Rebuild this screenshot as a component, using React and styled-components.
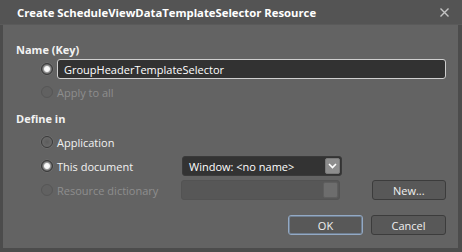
import React from "react";
import styled, { createGlobalStyle } from "styled-components";

const Global = createGlobalStyle`
  html, body {
    margin: 0;
    padding: 0;
    background: #4b4b4b;
  }
  * { box-sizing: border-box; }
`;

const Window = styled.div`
  width: 462px;
  height: 252px;
  display: flex;
  flex-direction: column;
  background: #636363;
  border-left: 3px solid #4c4c4c;
  border-right: 4px solid #4c4c4c;
  border-bottom: 4px solid #4c4c4c;
  font-family: "Open Sans", "Noto Sans", sans-serif;
  font-size: 11px;
  color: #f2f2f2;
`;

const TitleBar = styled.div`
  height: 25px;
  margin: 0 -4px 0 -3px;
  padding: 0 13px 0 17px;
  display: flex;
  align-items: center;
  justify-content: space-between;
  background: #545454;
  border-bottom: 1px solid #5a5a5a;
`;

const Title = styled.div`
  font-weight: 700;
  font-size: 11.3px;
  color: #ffffff;
`;

const Body = styled.div`
  flex: 1;
  display: flex;
  flex-direction: column;
  padding: 17px 12px 0 13px;
`;

const Heading = styled.div`
  font-weight: 700;
  line-height: 16px;
  height: 16px;
  margin-bottom: ${(p) => p.$mb || 0}px;
`;

const Row = styled.div`
  display: flex;
  align-items: center;
  height: 20px;
  margin-left: 25px;
  margin-bottom: ${(p) => p.$mb || 0}px;
`;

const RadioDot = styled.span`
  width: 12px;
  height: 12px;
  border-radius: 50%;
  flex: none;
  margin-right: 4px;
  border: 1px solid ${(p) => (p.$disabled ? "#565656" : "#3a3a3a")};
  background: ${(p) =>
    p.$checked
      ? "radial-gradient(circle, #ffffff 0, #f4f4f4 2.5px, #9a9a9a 3.5px, #5a5a5a 5px)"
      : p.$disabled
      ? "#616161"
      : "radial-gradient(circle, #5c5c5c 0, #6a6a6a 5px)"};
  box-shadow: ${(p) => (p.$disabled ? "none" : "0 0 0 0.5px #777")};
`;

const Label = styled.span`
  width: ${(p) => (p.$w ? `${p.$w}px` : "auto")};
  color: ${(p) => (p.$disabled ? "#8e8e8e" : "#f2f2f2")};
  white-space: nowrap;
`;

const TextInput = styled.div`
  flex: 1;
  height: 20px;
  padding-left: 6px;
  display: flex;
  align-items: center;
  background: #323232;
  border: 1px solid #cfcfcf;
  border-radius: 3px;
  color: #ffffff;
`;

const Combo = styled.div`
  width: 160px;
  height: 20px;
  padding: 0 1px 0 6px;
  display: flex;
  align-items: center;
  justify-content: space-between;
  background: ${(p) => (p.$disabled ? "#575757" : "#333333")};
  border: 1px solid ${(p) => (p.$disabled ? "#535353" : "#3a3a3a")};
  border-radius: 3px;
  color: #ffffff;
`;

const ComboButton = styled.span`
  width: 15px;
  height: 16px;
  display: flex;
  align-items: center;
  justify-content: center;
  border-radius: 2px;
  background: ${(p) => (p.$disabled ? "#6d6d6d" : "#8d8d8d")};
  border: 1px solid ${(p) => (p.$disabled ? "#5e5e5e" : "#7a7a7a")};
`;

const Button = styled.button`
  width: 75px;
  height: 20px;
  padding: 0;
  font-family: inherit;
  font-size: 11px;
  color: #f0f0f0;
  background: #585858;
  border: 1px solid ${(p) => (p.$default ? "#93a9c4" : "#3c3c3c")};
  box-shadow: ${(p) => (p.$default ? "inset 0 0 0 1px #6f7f92" : "none")};
  border-radius: 3px;
  margin-left: ${(p) => p.$ml || 0}px;
`;

const Footer = styled.div`
  display: flex;
  justify-content: flex-end;
  margin-top: 15px;
  gap: 8px;
`;

const Radio = ({ checked, disabled }) => (
  <RadioDot $checked={checked} $disabled={disabled} />
);

const Close = () => (
  <svg width="9" height="9" viewBox="0 0 9 9">
    <path d="M0.5 0.5 L8.5 8.5 M8.5 0.5 L0.5 8.5" stroke="#c4c4c4" strokeWidth="1.4" />
  </svg>
);

const Chevron = () => (
  <svg width="9" height="6" viewBox="0 0 9 6">
    <path d="M1 1 L4.5 4.5 L8 1" stroke="#ffffff" strokeWidth="1.6" fill="none" />
  </svg>
);

export default function App() {
  return (
    <>
      <Global />
      <Window>
        <TitleBar>
          <Title>Create ScheduleViewDataTemplateSelector Resource</Title>
          <Close />
        </TitleBar>
        <Body>
          <Heading $mb={1}>Name (Key)</Heading>
          <Row $mb={3}>
            <Radio checked />
            <TextInput>GroupHeaderTemplateSelector</TextInput>
          </Row>
          <Row $mb={9}>
            <Radio disabled />
            <Label $disabled>Apply to all</Label>
          </Row>
          <Heading $mb={5}>Define in</Heading>
          <Row $mb={4}>
            <Radio />
            <Label>Application</Label>
          </Row>
          <Row $mb={4}>
            <Radio checked />
            <Label $w={125}>This document</Label>
            <Combo>
              Window: &lt;no name&gt;
              <ComboButton>
                <Chevron />
              </ComboButton>
            </Combo>
          </Row>
          <Row>
            <Radio disabled />
            <Label $disabled $w={125}>Resource dictionary</Label>
            <Combo $disabled>
              <span />
              <ComboButton $disabled />
            </Combo>
            <Button $ml={32}>New...</Button>
          </Row>
          <Footer>
            <Button $default>OK</Button>
            <Button>Cancel</Button>
          </Footer>
        </Body>
      </Window>
    </>
  );
}
